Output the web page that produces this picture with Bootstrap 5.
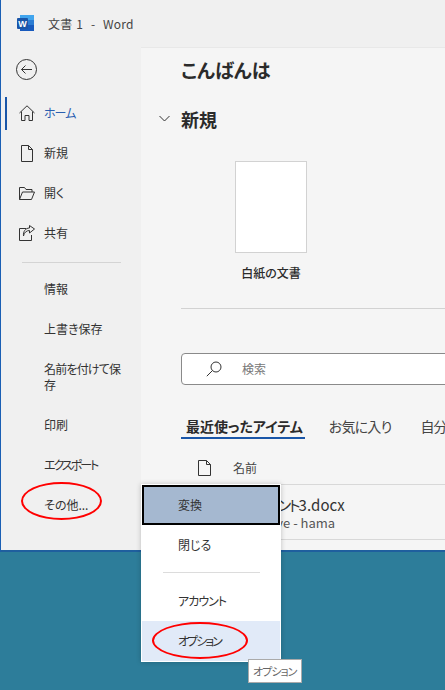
<!DOCTYPE html>
<html lang="ja">
<head>
    <meta charset="UTF-8">
    <meta name="viewport" content="width=device-width, initial-scale=1.0">
    <title>文書 1 - Word</title>
    <link href="https://cdn.jsdelivr.net/npm/bootstrap@5.3.0/dist/css/bootstrap.min.css" rel="stylesheet">
    <style>
        html, body { height: 690px; overflow: hidden; }
        body {
            background-color: #2d7d9a;
            font-family: "Noto Sans CJK JP", "Noto Sans", sans-serif;
            font-feature-settings: "palt";
            color: #333;
            font-size: 12px;
        }
        .word-window {
            height: 552px;
            background-color: #f0f0f0;
            border-left: 1px solid #1a5fb4;
            border-bottom: 2px solid #1f5f9e;
        }
        .title-bar { height: 47px; padding-left: 16px; color: #444; white-space: pre; letter-spacing: .2px; word-spacing: 1px; }
        .title-bar svg { margin-right: 14px; }
        .tight { letter-spacing: -2px; }
        .tight-1 { letter-spacing: -1px; }
        .tight-half { letter-spacing: -.8px; }
        .side-pane { width: 140px; }
        .back-btn { padding: 12px 0 0 15px; height: 46px; }
        .side-item { height: 40px; padding-left: 18px; color: #333; position: relative; }
        .side-item svg { margin-right: 9px; }
        .side-item.plain { padding-left: 43px; }
        .side-item.tall { height: 56px; line-height: 16px; padding-right: 16px; }
        .side-item.current { color: #2b5fb0; }
        .side-item.current::before {
            content: ""; position: absolute; left: 4px; top: 4px;
            width: 2px; height: 33px; background-color: #1a56a8;
        }
        .side-rule { height: 1px; background-color: #d4d4d4; margin: 9px 20px 6px 21px; }
        .main-pane { background-color: #f5f5f5; padding: 0 0 0 40px; border-top: 1px solid #e8e8e8; overflow: hidden; }
        .hello { font-size: 19px; font-weight: 700; line-height: 24px; margin-top: 10px; color: #2b2b2b; }
        .new-head { font-size: 18px; font-weight: 700; line-height: 24px; margin-top: 25px; color: #2b2b2b; position: relative; }
        .new-head svg { position: absolute; left: -22px; top: 8px; }
        .blank-wrap { width: 180px; margin-top: 30px; text-align: center; font-weight: 500; color: #2b2b2b; }
        .blank-page { width: 72px; height: 92px; background-color: #fff; border: 1px solid #d2d2d2; margin-bottom: 11px; }
        .thin-rule { height: 1px; background-color: #d2d2d2; width: 300px; margin-top: 26px; }
        .search-box {
            width: 300px; height: 32px; margin-top: 44px; padding-left: 24px;
            background-color: #fff; border: 1px solid #8a8a8a; border-radius: 4px; color: #777;
        }
        .search-box svg { margin-right: 20px; }
        .tab-row { margin-top: 31px; font-size: 14px; white-space: nowrap; height: 24px; color: #444; }
        .tab-on { font-weight: 700; color: #2b2b2b; border-bottom: 2px solid #1a56a8; padding: 0 2px 0 5px; margin-right: 24px; height: 23px; }
        .tab-off { margin-right: 29px; letter-spacing: -.8px; }
        .col-head { height: 38px; padding: 6px 0 0 17px; color: #444; margin-top: 6px; }
        .col-head svg { margin-right: 22px; }
        .file-row { height: 56px; width: 300px; padding-left: 53px; border-top: 1px solid #d8d8d8; border-bottom: 1px solid #d8d8d8; white-space: nowrap; }
        .file-name { font-size: 15px; line-height: 20px; margin-top: 10px; color: #333; }
        .file-path { font-size: 13px; line-height: 16px; color: #555; }
        .more-menu {
            position: absolute; left: 141px; top: 484px; width: 140px; height: 178px;
            background-color: #fff; box-shadow: 0 0 5px rgba(0,0,0,.22); padding: 1px;
        }
        .menu-row { height: 40px; padding-left: 36px; color: #333; }
        .menu-row.focused { background-color: #a5b8d0; outline: 2px solid #000; outline-offset: -2px; }
        .menu-row.hovered { background-color: #e1eaf8; }
        .menu-rule { height: 1px; background-color: #dcdcdc; margin: 7px 20px 8px 21px; }
        .hint-box {
            position: absolute; left: 248px; top: 659px; width: 54px; height: 24px;
            background-color: #fff; border: 1px solid #aaa; color: #666; font-size: 11px;
            padding-left: 4px; white-space: nowrap;
        }
        .red-ring { position: absolute; border: 2px solid #f00; border-radius: 50%; }
        .ring-more { left: 21px; top: 482px; width: 81px; height: 38px; }
        .ring-option { left: 152px; top: 622px; width: 96px; height: 37px; }
    </style>
</head>
<body>
    <div class="word-window d-flex flex-column">
        <!-- title bar -->
        <div class="title-bar d-flex align-items-center flex-shrink-0">
            <svg width="17" height="17" viewBox="0 0 17 17">
                <rect x="3" y="0" width="14" height="5" fill="#41a5ee"/>
                <rect x="3" y="5" width="14" height="5" fill="#2b7cd3"/>
                <rect x="3" y="10" width="14" height="6" fill="#185abd"/>
                <rect x="0" y="3" width="11" height="11" rx="1" fill="#1a55a8"/>
                <text x="5.5" y="12" font-size="9" font-weight="700" fill="#fff" text-anchor="middle" font-family="Liberation Sans, sans-serif">W</text>
            </svg>
            <span>文書 1  -  Word</span>
        </div>
        <div class="d-flex flex-grow-1" style="min-height:0">
            <!-- left pane -->
            <div class="side-pane flex-shrink-0">
                <div class="back-btn">
                    <svg width="21" height="21" viewBox="0 0 21 21" fill="none" stroke="#333" stroke-width="1">
                        <circle cx="10.5" cy="10.5" r="10"/>
                        <path d="M16 10.5H5.5M9.5 6.5l-4 4 4 4"/>
                    </svg>
                </div>
                <a class="side-item current d-flex align-items-center text-decoration-none">
                    <svg width="16" height="16" viewBox="0 0 16 16" fill="none" stroke="#333" stroke-width="1"><path d="M.5 8L8 .8 15.5 8M2.5 6.5v9h3.500v-5h4v5h3.500v-9"/></svg>
                    <span class="tight-1">ホーム</span>
                </a>
                <a class="side-item d-flex align-items-center text-decoration-none">
                    <svg width="16" height="17" viewBox="0 0 16 17" fill="none" stroke="#333" stroke-width="1"><path d="M2.500.500h7l4 4v12h-11zM9.500.500v4h4"/></svg>
                    <span>新規</span>
                </a>
                <a class="side-item d-flex align-items-center text-decoration-none">
                    <svg width="16" height="13" viewBox="0 0 16 13" fill="none" stroke="#333" stroke-width="1"><path d="M.5 12.500V.5h5l1.500 2h6v2.500M.5 12.500l3-7.500h12l-3 7.500z"/></svg>
                    <span>開く</span>
                </a>
                <a class="side-item d-flex align-items-center text-decoration-none">
                    <svg width="16" height="16" viewBox="0 0 16 16" fill="none" stroke="#333" stroke-width="1"><path d="M7 3.500H.5v12h12V10M4.500 11c.5-3.500 3-5.500 6-5.500V8L15.500 4 10.500.5V3C6.500 3 4 6.500 4.500 11z"/></svg>
                    <span>共有</span>
                </a>
                <div class="side-rule"></div>
                <a class="side-item plain d-flex align-items-center text-decoration-none">情報</a>
                <a class="side-item plain d-flex align-items-center text-decoration-none">上書き保存</a>
                <a class="side-item plain tall d-flex align-items-center text-decoration-none"><span class="tight-half">名前を付けて保存</span></a>
                <a class="side-item plain d-flex align-items-center text-decoration-none">印刷</a>
                <a class="side-item plain d-flex align-items-center text-decoration-none"><span class="tight">エクスポート</span></a>
                <a class="side-item plain d-flex align-items-center text-decoration-none">その他...</a>
            </div>
            <!-- main pane -->
            <div class="main-pane flex-grow-1">
                <div class="hello">こんばんは</div>
                <div class="new-head">
                    <svg width="11" height="7" viewBox="0 0 11 7" fill="none" stroke="#333" stroke-width="1"><path d="M.5 1l5 5 5-5"/></svg>
                    新規
                </div>
                <div class="blank-wrap d-flex flex-column align-items-center">
                    <div class="blank-page"></div>
                    <div>白紙の文書</div>
                </div>
                <div class="thin-rule"></div>
                <div class="search-box d-flex align-items-center">
                    <svg width="16" height="16" viewBox="0 0 16 16" fill="none" stroke="#333" stroke-width="1"><circle cx="10" cy="6" r="5"/><path d="M6.500 9.500L.8 15.200"/></svg>
                    <span>検索</span>
                </div>
                <div class="tab-row d-flex">
                    <div class="tab-on">最近使ったアイテム</div>
                    <div class="tab-off">お気に入り</div>
                    <div class="tab-off">自分と共有</div>
                </div>
                <div class="col-head d-flex align-items-center">
                    <svg width="13" height="16" viewBox="0 0 13 16" fill="none" stroke="#333" stroke-width="1"><path d="M.5.500h8l4 4v11H.5zM8.500.500v4h4"/></svg>
                    <span>名前</span>
                </div>
                <div class="file-row">
                    <div class="file-name"><span class="tight">ドキュメント</span>3.docx</div>
                    <div class="file-path">OneDrive - hama</div>
                </div>
            </div>
        </div>
    </div>

    <!-- その他 popup menu -->
    <div class="more-menu">
        <div class="menu-row focused d-flex align-items-center">変換</div>
        <div class="menu-row d-flex align-items-center">閉じる</div>
        <div class="menu-rule"></div>
        <div class="menu-row d-flex align-items-center"><span class="tight-1">アカウント</span></div>
        <div class="menu-row hovered d-flex align-items-center"><span class="tight">オプション</span></div>
    </div>
    <div class="hint-box d-flex align-items-center"><span class="tight-1">オプション</span></div>
    <div class="red-ring ring-more"></div>
    <div class="red-ring ring-option"></div>

    <script src="https://cdn.jsdelivr.net/npm/bootstrap@5.3.0/dist/js/bootstrap.bundle.min.js"></script>
</body>
</html>
